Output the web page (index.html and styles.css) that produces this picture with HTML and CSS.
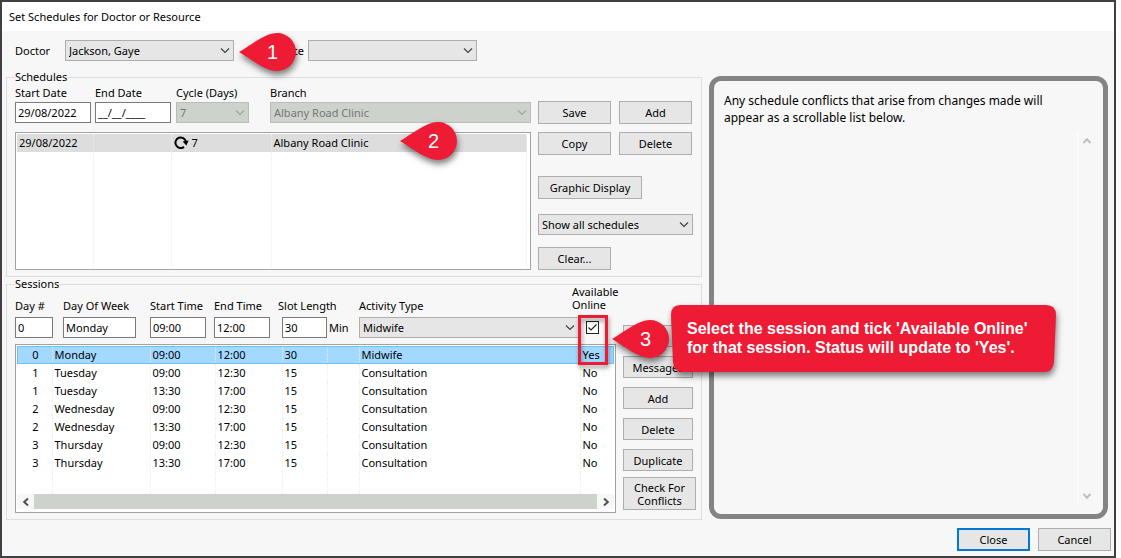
FILE: index.html
```
<!DOCTYPE html>
<html lang="en">
<head>
    <meta charset="UTF-8">
    <meta name="viewport" content="width=device-width, initial-scale=1.0">
    <title>Set Schedules for Doctor or Resource</title>
    <link rel="stylesheet" href="styles.css">
</head>
<body>

    <div class="dialog">
        <h1 class="title-bar">Set Schedules for Doctor or Resource</h1>

        <div class="picker">
            <label class="picker-doctor" for="doctor">Doctor</label>
            <select id="doctor"><option>Jackson, Gaye</option></select>
            <label class="picker-resource" for="resource">Resource</label>
            <select id="resource"><option></option></select>
        </div>

        <div class="main">
            <div class="left">

                <!-- Schedules -->
                <fieldset class="group schedules">
                    <legend>Schedules</legend>
                    <div class="schedule-data">
                        <div class="schedule-fields">
                            <div class="field">
                                <label for="startDate">Start Date</label>
                                <input type="text" id="startDate" value="29/08/2022">
                            </div>
                            <div class="field">
                                <label for="endDate">End Date</label>
                                <input type="text" id="endDate" value="__/__/____">
                            </div>
                            <div class="field cycle">
                                <label for="cycle">Cycle (Days)</label>
                                <select id="cycle" disabled><option>7</option></select>
                            </div>
                            <div class="field branch">
                                <label for="branch">Branch</label>
                                <select id="branch" disabled><option>Albany Road Clinic</option></select>
                            </div>
                        </div>
                        <div class="list schedule-list">
                            <table>
                                <colgroup><col class="c-start"><col class="c-end"><col class="c-cycle"><col></colgroup>
                                <tbody>
                                    <tr class="current">
                                        <td>29/08/2022</td>
                                        <td></td>
                                        <td>
                                            <svg class="repeat" viewBox="0 0 15 13" width="15" height="13" aria-hidden="true">
                                                <path d="M10 10.9A5.3 5.3 0 1 1 11.9 5.5" fill="none" stroke="#000" stroke-width="2"/>
                                                <path d="M8.6 5.4L14.6 4.6L12.4 9.4z" fill="#000"/>
                                            </svg>7
                                        </td>
                                        <td>Albany Road Clinic</td>
                                    </tr>
                                    <tr class="filler"><td></td><td></td><td></td><td></td></tr>
                                </tbody>
                            </table>
                        </div>
                    </div>
                    <div class="schedule-actions">
                        <div class="button-pair">
                            <button type="button">Save</button>
                            <button type="button">Add</button>
                            <button type="button">Copy</button>
                            <button type="button">Delete</button>
                        </div>
                        <button type="button" class="graphic">Graphic Display</button>
                        <select class="filter" aria-label="Filter schedules"><option>Show all schedules</option></select>
                        <button type="button">Clear...</button>
                    </div>
                </fieldset>

                <!-- Sessions -->
                <fieldset class="group sessions">
                    <legend>Sessions</legend>
                    <div class="session-data">
                        <div class="session-fields">
                            <div class="field day">
                                <label for="day">Day #</label>
                                <input type="text" id="day" value="0">
                            </div>
                            <div class="field weekday">
                                <label for="weekday">Day Of Week</label>
                                <input type="text" id="weekday" value="Monday">
                            </div>
                            <div class="field time">
                                <label for="startTime">Start Time</label>
                                <input type="text" id="startTime" value="09:00">
                            </div>
                            <div class="field time">
                                <label for="endTime">End Time</label>
                                <input type="text" id="endTime" value="12:00">
                            </div>
                            <div class="field slot">
                                <label for="slot">Slot Length</label>
                                <div class="slot-entry"><input type="text" id="slot" value="30"><span>Min</span></div>
                            </div>
                            <div class="field activity">
                                <label for="activity">Activity Type</label>
                                <select id="activity"><option>Midwife</option></select>
                            </div>
                            <div class="field online">
                                <label for="online">Available Online</label>
                                <input type="checkbox" id="online" checked>
                            </div>
                        </div>
                        <div class="list session-list">
                            <table>
                                <colgroup><col class="s-day"><col class="s-weekday"><col class="s-start"><col class="s-end"><col class="s-slot"><col class="s-gap"><col><col class="s-online"></colgroup>
                                <tbody>
                                    <tr class="selected"><td>0</td><td>Monday</td><td>09:00</td><td>12:00</td><td>30</td><td></td><td>Midwife</td><td>Yes</td></tr>
                                    <tr><td>1</td><td>Tuesday</td><td>09:00</td><td>12:30</td><td>15</td><td></td><td>Consultation</td><td>No</td></tr>
                                    <tr><td>1</td><td>Tuesday</td><td>13:30</td><td>17:00</td><td>15</td><td></td><td>Consultation</td><td>No</td></tr>
                                    <tr><td>2</td><td>Wednesday</td><td>09:00</td><td>12:30</td><td>15</td><td></td><td>Consultation</td><td>No</td></tr>
                                    <tr><td>2</td><td>Wednesday</td><td>13:30</td><td>17:00</td><td>15</td><td></td><td>Consultation</td><td>No</td></tr>
                                    <tr><td>3</td><td>Thursday</td><td>09:00</td><td>12:30</td><td>15</td><td></td><td>Consultation</td><td>No</td></tr>
                                    <tr><td>3</td><td>Thursday</td><td>13:30</td><td>17:00</td><td>15</td><td></td><td>Consultation</td><td>No</td></tr>
                                    <tr class="filler"><td></td><td></td><td></td><td></td><td></td><td></td><td></td><td></td></tr>
                                </tbody>
                            </table>
                            <div class="scroll-x">
                                <button type="button" aria-label="Scroll left"><svg viewBox="0 0 8 8" width="8" height="8"><path d="M6 0.5L2.2 4L6 7.5" /></svg></button>
                                <div class="thumb"></div>
                                <button type="button" aria-label="Scroll right"><svg viewBox="0 0 8 8" width="8" height="8"><path d="M2 0.5L5.8 4L2 7.5" /></svg></button>
                            </div>
                        </div>
                    </div>
                    <div class="session-actions">
                        <button type="button" aria-label="Save"></button>
                        <button type="button">Messages</button>
                        <button type="button">Add</button>
                        <button type="button">Delete</button>
                        <button type="button">Duplicate</button>
                        <button type="button" class="check">Check For Conflicts</button>
                    </div>
                </fieldset>
            </div>

            <!-- Conflicts -->
            <section class="conflicts">
                <p>Any schedule conflicts that arise from changes made will<br>appear as a scrollable list below.</p>
                <div class="conflict-list">
                    <div class="scroll-y">
                        <svg viewBox="0 0 8 8" width="8" height="8"><path d="M0.5 6L4 2.2L7.5 6" /></svg>
                        <svg viewBox="0 0 8 8" width="8" height="8"><path d="M0.5 2L4 5.8L7.5 2" /></svg>
                    </div>
                </div>
            </section>
        </div>

        <div class="footer">
            <button type="button" class="default">Close</button>
            <button type="button">Cancel</button>
        </div>

        <!-- Numbered steps over the dialog -->
        <div class="highlight"></div>
        <div class="marker step-1">
            <svg viewBox="0 0 57 38" width="57" height="38" aria-hidden="true"><path d="M0 19C12 12 26 0 38 0A19 19 0 0 1 38 38C26 38 12 26 0 19Z" /></svg>
            <span>1</span>
        </div>
        <div class="marker step-2">
            <svg viewBox="0 0 57 38" width="57" height="38" aria-hidden="true"><path d="M0 19C12 12 26 0 38 0A19 19 0 0 1 38 38C26 38 12 26 0 19Z" /></svg>
            <span>2</span>
        </div>
        <div class="marker step-3">
            <svg viewBox="0 0 57 38" width="57" height="38" aria-hidden="true"><path d="M0 19C12 12 26 0 38 0A19 19 0 0 1 38 38C26 38 12 26 0 19Z" /></svg>
            <span>3</span>
        </div>
        <div class="callout">
            <svg viewBox="0 0 386 67" preserveAspectRatio="none" aria-hidden="true"><path d="M9 0H376Q386 0 386 10L384 57Q383 67 374 67H12Q3 67 2 57L0 10Q0 0 9 0Z" /></svg>
            <p>Select the session and tick 'Available Online'<br>for that session. Status will update to 'Yes'.</p>
        </div>
    </div>

</body>
</html>
```
FILE: styles.css
```
* {
    box-sizing: border-box;
}
body {
    margin: 0;
    padding-right: 5px;
    background-color: #fff;
    font-family: 'Noto Sans', 'Open Sans', sans-serif;
    font-size: 11px;
    line-height: 14px;
    color: #000;
}

/* Dialog */
.dialog {
    position: relative;
    display: flex;
    flex-direction: column;
    min-height: 100vh;
    background-color: #f7f7f7;
    border: 2px solid #404042;
}
.title-bar {
    margin: 0;
    padding: 0 7px;
    background-color: #fff;
    font-size: 11px;
    font-weight: normal;
    line-height: 29px;
}
.picker {
    display: flex;
    align-items: center;
    padding: 9px 13px;
}
.picker select {
    width: 169px;
}
.picker-doctor {
    width: 50px;
}
.picker-resource {
    width: 74px;
    padding-right: 4px;
    text-align: right;
}
.main {
    display: grid;
    flex: 1;
    grid-template-columns: minmax(0, 696fr) minmax(0, 399fr);
    gap: 7px;
    padding: 0 6px 0 4px;
}
.left {
    display: flex;
    flex-direction: column;
}

/* Controls */
button, input, select {
    margin: 0;
    font: inherit;
    color: #000;
    border-radius: 0;
}
button {
    width: 73px;
    height: 23px;
    padding: 0;
    background-color: #e6e6e6;
    border: 1px solid #adadad;
    line-height: 13px;
}
input[type="text"] {
    height: 21px;
    padding: 0 2px;
    background-color: #fff;
    border: 1px solid #7a7a7a;
}
select {
    height: 21px;
    padding: 0 3px;
    appearance: none;
    background: #e6e6e6 url("data:image/svg+xml,%3Csvg xmlns='http://www.w3.org/2000/svg' width='10' height='6'%3E%3Cpath d='M1 .5L5 4.5L9 .5' fill='none' stroke='%23444' stroke-width='1.2'/%3E%3C/svg%3E") no-repeat right 3px center;
    border: 1px solid #adadad;
}
select:disabled {
    color: #767676;
    opacity: 1;
    background-color: #cdd2cd;
    background-image: url("data:image/svg+xml,%3Csvg xmlns='http://www.w3.org/2000/svg' width='10' height='6'%3E%3Cpath d='M1 .5L5 4.5L9 .5' fill='none' stroke='%23a3a3a3' stroke-width='1.2'/%3E%3C/svg%3E");
    border-color: #b9beb9;
}
input[type="checkbox"] {
    width: 13px;
    height: 13px;
    appearance: none;
    background-color: #fff;
    border: 1px solid #222;
}
input[type="checkbox"]:checked {
    background-image: url("data:image/svg+xml,%3Csvg xmlns='http://www.w3.org/2000/svg' width='11' height='11'%3E%3Cpath d='M1.5 5.5L4 8L9.5 2.5' fill='none' stroke='%23222' stroke-width='1.2'/%3E%3C/svg%3E");
}
.field {
    display: flex;
    flex-direction: column;
    gap: 2px;
}

/* Groups */
.group {
    display: flex;
    min-width: 0;
    margin: 0;
    padding: 0 8px 6px;
    border: 1px solid #dcdfdc;
}
.group legend {
    padding: 0;
    line-height: 14px;
}
.schedules {
    gap: 7px;
    height: 207px;
}
.sessions {
    flex: 1;
    gap: 7px;
    padding-right: 5px;
}

/* Schedules */
.schedule-data {
    display: flex;
    flex: 1;
    flex-direction: column;
    gap: 9px;
    padding-top: 2px;
}
.schedule-fields {
    display: flex;
    gap: 4px;
}
.schedule-fields input {
    width: 76px;
}
.cycle {
    width: 91px;
    padding-left: 1px;
}
.cycle select {
    width: 73px;
}
.branch {
    flex: 1;
}
.list {
    display: flex;
    flex: 1;
    flex-direction: column;
    padding: 1px;
    background-color: #fff;
    border: 1px solid #a0a3a6;
}
.schedule-list {
    padding-right: 3px;
}
.list table {
    flex: 1;
    width: 100%;
    height: 100%;
    border-collapse: collapse;
    table-layout: fixed;
}
.list tr {
    height: 18px;
}
.list .filler {
    height: auto;
}
.list td {
    padding: 0 2px;
    border-right: 1px dotted #ececec;
    white-space: nowrap;
}
.current {
    background-color: #ddd;
}
.repeat {
    margin-right: 3px;
    vertical-align: -2px;
}
.c-start {
    width: 76px;
}
.c-end {
    width: 78px;
}
.c-cycle {
    width: 100px;
}
.schedule-actions {
    display: flex;
    flex-direction: column;
    align-items: flex-start;
    width: 155px;
    padding-top: 17px;
}
.button-pair {
    display: grid;
    grid-template-columns: 73px 73px;
    gap: 8px;
    margin-bottom: 21px;
}
.schedule-actions .graphic {
    width: 104px;
}
.filter {
    width: 100%;
    margin: 15px 0 12px;
}

/* Sessions */
.session-data {
    display: flex;
    flex: 1;
    flex-direction: column;
    gap: 6px;
}
.session-fields {
    display: flex;
    align-items: flex-end;
    margin-top: -6px;
}
.session-fields .field {
    gap: 4px;
}
.day {
    width: 48px;
}
.day input {
    width: 38px;
}
.weekday {
    width: 87px;
}
.weekday input {
    width: 73px;
}
.time {
    width: 64px;
}
.time input {
    width: 56px;
}
.slot {
    width: 81px;
}
.slot-entry {
    display: flex;
    align-items: center;
    gap: 2px;
    padding-left: 4px;
}
.slot-entry input {
    width: 45px;
}
.activity {
    flex: 1;
}
.online {
    width: 37px;
    line-height: 13px;
}
.online label {
    align-self: flex-end;
    width: 44px;
}
.online input {
    margin: 6px 0 4px 7px;
}
.s-day {
    width: 35px;
}
.s-weekday {
    width: 98px;
}
.s-start {
    width: 65px;
}
.s-end {
    width: 67px;
}
.s-slot {
    width: 45px;
}
.s-gap {
    width: 32px;
}
.s-online {
    width: 34px;
}
.session-list td:first-child {
    padding-right: 13px;
    text-align: right;
}
.session-list td:last-child {
    border-right: none;
}
.selected {
    background-color: #a3d9ff;
    outline: 1px solid #70c0f8;
    outline-offset: -1px;
}
.scroll-x {
    display: flex;
    height: 17px;
    padding-bottom: 2px;
}
.scroll-x button {
    width: 17px;
    height: 15px;
    background-color: #f7f7f7;
    border: none;
}
.scroll-x svg, .scroll-y svg {
    display: block;
    margin: 0 auto;
    fill: none;
    stroke: #505050;
    stroke-width: 2;
}
.thumb {
    flex: 1;
    background-color: #cdd2cd;
}
.session-actions {
    display: flex;
    flex-direction: column;
    gap: 9px;
    width: 73px;
    padding-top: 34px;
}
.session-actions button {
    width: 70px;
    height: 22px;
}
.session-actions .check {
    width: 73px;
    height: 33px;
    padding: 0 8px;
    margin-top: -3px;
}

/* Conflicts */
.conflicts {
    display: flex;
    flex-direction: column;
    margin: 6px 0 1px;
    padding: 11px 7px 9px 10px;
    border: 5px solid #848484;
    border-radius: 12px;
    font-size: 12px;
    line-height: 17px;
}
.conflicts p {
    margin: 0 0 6px;
}
.conflict-list {
    display: flex;
    flex: 1;
    justify-content: flex-end;
}
.scroll-y {
    display: flex;
    flex-direction: column;
    justify-content: space-between;
    width: 19px;
    padding: 5px 0;
    border-left: 1px solid #fff;
}
.scroll-y svg {
    stroke: #bfbfbf;
}

.footer {
    display: flex;
    justify-content: flex-end;
    gap: 8px;
    padding: 8px 3px 5px;
}
.default {
    border: 2px solid #0078d7;
}

/* Step markers */
.marker, .callout, .highlight {
    position: absolute;
}
.marker {
    width: 57px;
    height: 38px;
    font-family: 'Liberation Sans', Arial, sans-serif;
    font-size: 20px;
    line-height: 38px;
    color: #fff;
}
.marker svg, .callout svg {
    position: absolute;
    top: 0;
    left: 0;
    fill: #ee1b34;
    overflow: visible;
    filter: drop-shadow(1px 4px 3px rgba(0, 0, 0, 0.5));
}
.marker span {
    position: relative;
    display: block;
    padding-left: 10px;
    text-align: center;
}
.step-1 {
    top: 31px;
    left: 237px;
}
.step-2 {
    top: 120px;
    left: 398px;
}
.step-3 {
    top: 318px;
    left: 610px;
}
.highlight {
    top: 313px;
    left: 576px;
    width: 30px;
    height: 50px;
    border: 3px solid #ee1b34;
    filter: drop-shadow(1px 3px 2px rgba(0, 0, 0, 0.4));
}
.callout {
    top: 303px;
    left: 669px;
    width: 385px;
    padding: 14px 0 15px 16px;
    font-family: 'Liberation Sans', Arial, sans-serif;
    font-size: 16px;
    font-weight: bold;
    line-height: 19px;
    color: #fff;
}
.callout svg {
    width: 100%;
    height: 100%;
}
.callout p {
    position: relative;
    margin: 0;
}
```
